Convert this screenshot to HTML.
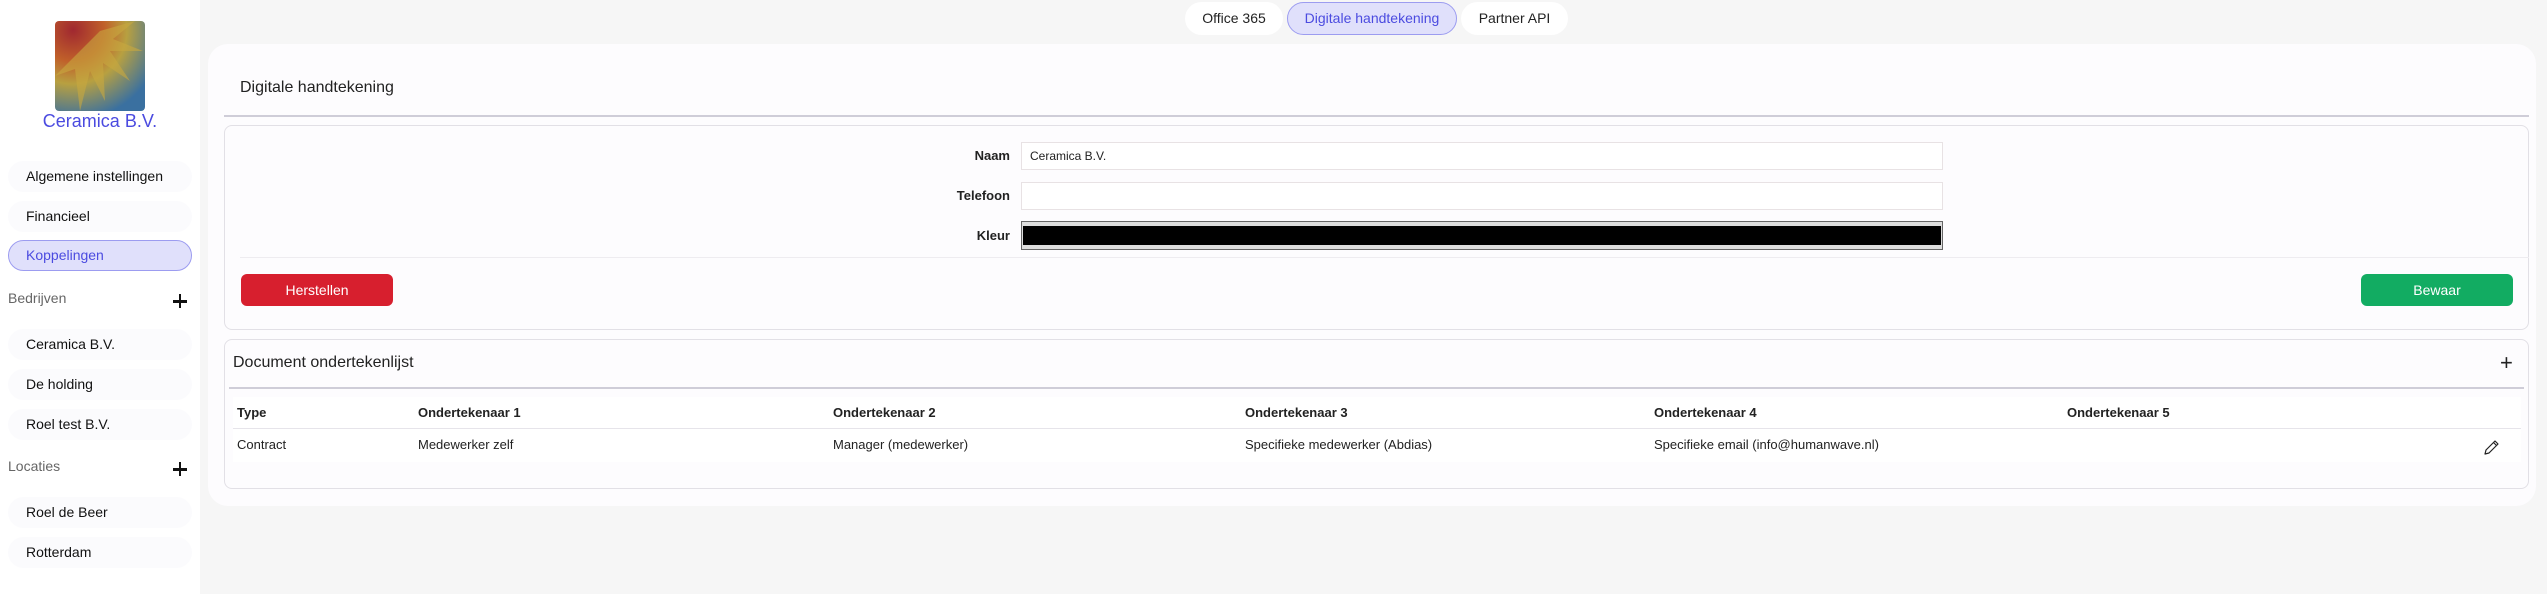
<!DOCTYPE html>
<html><head><meta charset="utf-8"><style>
*{box-sizing:border-box;margin:0;padding:0}
body{width:2547px;height:594px;background:#f6f6f6;font-family:"Liberation Sans",sans-serif;color:#222;position:relative;overflow:hidden;font-size:14px}
.abs{position:absolute}
.side{left:0;top:0;width:200px;height:594px;background:#fff}
.pill{position:absolute;left:8px;width:184px;height:31px;border-radius:16px;background:#fbfbfd;padding-left:18px;line-height:31px;font-size:14px;color:#111}
.pill.act{background:#e0e0fb;border:1px solid #9c9cf0;color:#4b4be0;line-height:29px;padding-left:17px}
.lbl{position:absolute;left:8px;font-size:14px;color:#666}
.plus{position:absolute;left:170px;width:20px;height:20px}
.plus:before,.plus:after{content:"";position:absolute;background:#111}
.plus:before{left:3px;top:9px;width:14px;height:2.5px}
.plus:after{left:8.75px;top:3px;width:2.5px;height:14px}
.tab{position:absolute;top:2px;height:33px;border-radius:17px;background:#fff;line-height:33px;text-align:center;font-size:14px;color:#222}
.tab.act{background:#e0e0fb;border:1px solid #9c9cf0;color:#4b4be0;line-height:31px}
.card{left:208px;top:44px;width:2328px;height:462px;background:#fdfcfe;border-radius:20px}
.box{position:absolute;background:#fdfcfe;border:1px solid #e2e0e6;border-radius:8px}
.inp{position:absolute;left:1021px;width:922px;height:28px;background:#fff;border:1px solid #e8e2e4;font-size:12px;line-height:26px;padding-left:8px}
.flbl{position:absolute;right:1537px;font-weight:bold;font-size:13px}
.btn{position:absolute;top:274px;height:32px;border-radius:6px;color:#fff;text-align:center;line-height:32px;font-size:14px}
.th{position:absolute;top:405px;font-weight:bold;font-size:13px}
.td{position:absolute;top:437px;font-size:13px}
</style></head><body>
<div class="abs side">
  <svg class="abs" style="left:55px;top:21px" width="90" height="90" viewBox="0 0 90 90">
    <defs><radialGradient id="g" cx="0.2" cy="0.1" r="1"><stop offset="0" stop-color="#a02830"/><stop offset="0.35" stop-color="#c0602a"/><stop offset="0.6" stop-color="#b8a040"/><stop offset="1" stop-color="#3a70a0"/></radialGradient></defs>
    <rect width="90" height="90" rx="4" fill="url(#g)"/>
    <path d="M0 55 L20 48 L25 90 L35 50 L50 80 L48 42 L75 60 L55 30 L88 30 L58 18 L80 0 L45 10" fill="#c8a840" opacity=".6"/>
  </svg>
  <div class="abs" style="left:0;width:200px;top:111px;text-align:center;font-size:18px;color:#4b4be0">Ceramica B.V.</div>
  <div class="pill" style="top:161px">Algemene instellingen</div>
  <div class="pill" style="top:201px">Financieel</div>
  <div class="pill act" style="top:240px">Koppelingen</div>
  <div class="lbl" style="top:290px">Bedrijven</div><div class="plus" style="top:291px"></div>
  <div class="pill" style="top:329px">Ceramica B.V.</div>
  <div class="pill" style="top:369px">De holding</div>
  <div class="pill" style="top:409px">Roel test B.V.</div>
  <div class="lbl" style="top:458px">Locaties</div><div class="plus" style="top:459px"></div>
  <div class="pill" style="top:497px">Roel de Beer</div>
  <div class="pill" style="top:537px">Rotterdam</div>
</div>
<div class="tab" style="left:1185px;width:98px">Office 365</div>
<div class="tab act" style="left:1287px;width:170px">Digitale handtekening</div>
<div class="tab" style="left:1461px;width:107px">Partner API</div>
<div class="abs card"></div>
<div class="abs" style="left:240px;top:79px;font-size:16px">Digitale handtekening</div>
<div class="abs" style="left:224px;top:115px;width:2305px;height:2px;background:#cfcdd8"></div>
<div class="box" style="left:224px;top:125px;width:2305px;height:205px"></div>
<div class="flbl" style="top:148px">Naam</div>
<div class="inp" style="top:142px">Ceramica B.V.</div>
<div class="flbl" style="top:188px">Telefoon</div>
<div class="inp" style="top:182px"></div>
<div class="flbl" style="top:228px">Kleur</div>
<div class="abs" style="left:1021px;top:221px;width:922px;height:29px;border:1px solid #666;background:#ddd;padding:4px 1px"><div style="background:#000;height:19px"></div></div>
<div class="abs" style="left:240px;top:257px;width:2289px;height:1px;background:#eeecf0"></div>
<div class="btn" style="left:241px;width:152px;background:#d71f2e">Herstellen</div>
<div class="btn" style="left:2361px;width:152px;background:#12ac62">Bewaar</div>
<div class="box" style="left:224px;top:339px;width:2305px;height:150px"></div>
<div class="abs" style="left:233px;top:354px;font-size:16px">Document ondertekenlijst</div>
<div class="abs" style="left:2500px;top:350px;font-size:22px;font-weight:300">+</div>
<div class="abs" style="left:229px;top:387px;width:2295px;height:2px;background:#cfcdd8"></div>
<div class="abs" style="left:233px;top:397px;width:2288px;height:65px;background:#fff"></div>
<div class="abs" style="left:233px;top:428px;width:2288px;height:1px;background:#e6e4ea"></div>
<div class="th" style="left:237px">Type</div>
<div class="th" style="left:418px">Ondertekenaar 1</div>
<div class="th" style="left:833px">Ondertekenaar 2</div>
<div class="th" style="left:1245px">Ondertekenaar 3</div>
<div class="th" style="left:1654px">Ondertekenaar 4</div>
<div class="th" style="left:2067px">Ondertekenaar 5</div>
<div class="td" style="left:237px">Contract</div>
<div class="td" style="left:418px">Medewerker zelf</div>
<div class="td" style="left:833px">Manager (medewerker)</div>
<div class="td" style="left:1245px">Specifieke medewerker (Abdias)</div>
<div class="td" style="left:1654px">Specifieke email (info@humanwave.nl)</div>
<svg class="abs" style="left:2483px;top:438px" width="18" height="18" viewBox="0 0 18 18"><path d="M2 16 L3 12 L12 3 L15 6 L6 15 Z M10.5 4.5 L13.5 7.5" fill="none" stroke="#222" stroke-width="1.2" stroke-linejoin="round"/></svg>
</body></html>
